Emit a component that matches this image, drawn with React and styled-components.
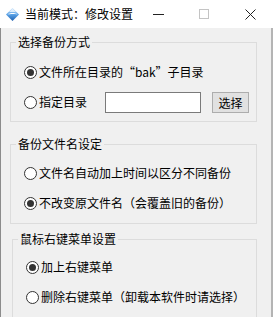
import React from "react";
import styled, { createGlobalStyle } from "styled-components";

const Global = createGlobalStyle`
  html, body { margin: 0; padding: 0; background: #f0f0f0; }
  #root { width: 273px; height: 317px; overflow: hidden; }
  * { box-sizing: border-box; }
`;

const FONT = `"Noto Sans CJK SC", "Microsoft YaHei", "Liberation Sans", sans-serif`;

const Window = styled.div`
  width: 273px;
  height: 317px;
  display: flex;
  flex-direction: column;
  font-family: ${FONT};
  font-size: 12px;
  color: #000;
  background: #f0f0f0;
`;

const TitleBar = styled.div`
  height: 28px;
  flex: none;
  background: #fff;
  display: flex;
  align-items: center;
`;

const AppIcon = styled.svg`
  width: 15px;
  height: 15px;
  margin-left: 5px;
  flex: none;
`;

const Title = styled.div`
  margin-left: 5px;
  line-height: 14px;
  flex: 1;
  white-space: nowrap;
`;

const CtlButton = styled.div`
  width: 46px;
  height: 28px;
  display: flex;
  align-items: center;
  justify-content: center;
  flex: none;
`;

const Body = styled.div`
  flex: 1;
  padding: 14px 14px 0 9px;
  border-left: 1px solid #8c8c8c;
  border-right: 2px solid #b4b4b4;
  display: flex;
  flex-direction: column;
`;

const Group = styled.div`
  position: relative;
  border: 1px solid #dcdcdc;
  margin-top: ${(p) => p.$mt || 0}px;
  margin-left: ${(p) => p.$ml || 0}px;
  padding: ${(p) => p.$pt}px 0 ${(p) => p.$pb}px 13px;
  margin-left: ${(p) => (p.$ml || 0) - 1}px;
`;

const Legend = styled.span`
  position: absolute;
  top: -8px;
  left: 5px;
  padding: 0 2px;
  background: #f0f0f0;
  line-height: 14px;
  white-space: nowrap;
`;

const Row = styled.div`
  height: 30px;
  display: flex;
  align-items: center;
  white-space: nowrap;
`;

const RadioCircle = styled.span`
  width: 13px;
  height: 13px;
  border-radius: 50%;
  border: 1px solid #333;
  background: #fff;
  flex: none;
  display: flex;
  align-items: center;
  justify-content: center;
  margin-right: 2px;
  &::after {
    content: "";
    width: 7px;
    height: 7px;
    border-radius: 50%;
    background: ${(p) => (p.$checked ? "#333" : "transparent")};
  }
`;

const Label = styled.span`
  line-height: 14px;
`;

const TextBox = styled.div`
  width: 96px;
  height: 21px;
  border: 1px solid #7a7a7a;
  background: #fff;
  margin-left: 18px;
  flex: none;
`;

const Button = styled.div`
  width: 37px;
  height: 21px;
  margin-left: 11px;
  margin-top: 1px;
  border: 1px solid #adadad;
  background: #e1e1e1;
  display: flex;
  align-items: center;
  justify-content: center;
  line-height: 14px;
  flex: none;
`;

const Radio = ({ checked, children }) => (
  <>
    <RadioCircle $checked={checked} />
    <Label>{children}</Label>
  </>
);

export default function App() {
  return (
    <>
      <Global />
      <Window>
        <TitleBar>
          <AppIcon viewBox="0 0 15 15">
            <defs>
              <linearGradient id="g1" x1="0" y1="0" x2="0" y2="1">
                <stop offset="0" stopColor="#cfe6fb" />
                <stop offset="0.5" stopColor="#5aa2e6" />
                <stop offset="1" stopColor="#1d5fb0" />
              </linearGradient>
            </defs>
            <path d="M7.5 1 L14 7.5 L7.5 14 L1 7.5 Z" fill="url(#g1)" />
            <path d="M2.5 7.5 C5 5.5 10 5.5 12.5 7.5 C10 6.8 5 6.8 2.5 7.5 Z" fill="#fff" />
            <path d="M4 5 L7.5 1.8 L11 5 Z" fill="#eef6ff" opacity="0.8" />
          </AppIcon>
          <Title>当前模式：修改设置</Title>
          <CtlButton>
            <svg width="11" height="11" viewBox="0 0 11 11">
              <line x1="0" y1="5.5" x2="11" y2="5.5" stroke="#222" strokeWidth="1" />
            </svg>
          </CtlButton>
          <CtlButton>
            <svg width="10" height="10" viewBox="0 0 10 10">
              <rect x="0.5" y="0.5" width="9" height="9" fill="none" stroke="#c4c4c4" strokeWidth="1" />
            </svg>
          </CtlButton>
          <CtlButton>
            <svg width="11" height="11" viewBox="0 0 11 11">
              <path d="M0.5 0.5 L10.5 10.5 M10.5 0.5 L0.5 10.5" stroke="#222" strokeWidth="1" />
            </svg>
          </CtlButton>
        </TitleBar>
        <Body>
          <Group $pt={14} $pb={4} $ml={1}>
            <Legend>选择备份方式</Legend>
            <Row>
              <Radio checked>文件所在目录的“bak”子目录</Radio>
            </Row>
            <Row>
              <Radio>指定目录</Radio>
              <TextBox />
              <Button>选择</Button>
            </Row>
          </Group>
          <Group $pt={13} $pb={5} $mt={22} $ml={1}>
            <Legend>备份文件名设定</Legend>
            <Row>
              <Radio>文件名自动加上时间以区分不同备份</Radio>
            </Row>
            <Row>
              <Radio checked>不改变原文件名（会覆盖旧的备份）</Radio>
            </Row>
          </Group>
          <Group $pt={12} $pb={6} $mt={15} $ml={3}>
            <Legend>鼠标右键菜单设置</Legend>
            <Row>
              <Radio checked>加上右键菜单</Radio>
            </Row>
            <Row>
              <Radio>删除右键菜单（卸载本软件时请选择）</Radio>
            </Row>
          </Group>
        </Body>
      </Window>
    </>
  );
}
